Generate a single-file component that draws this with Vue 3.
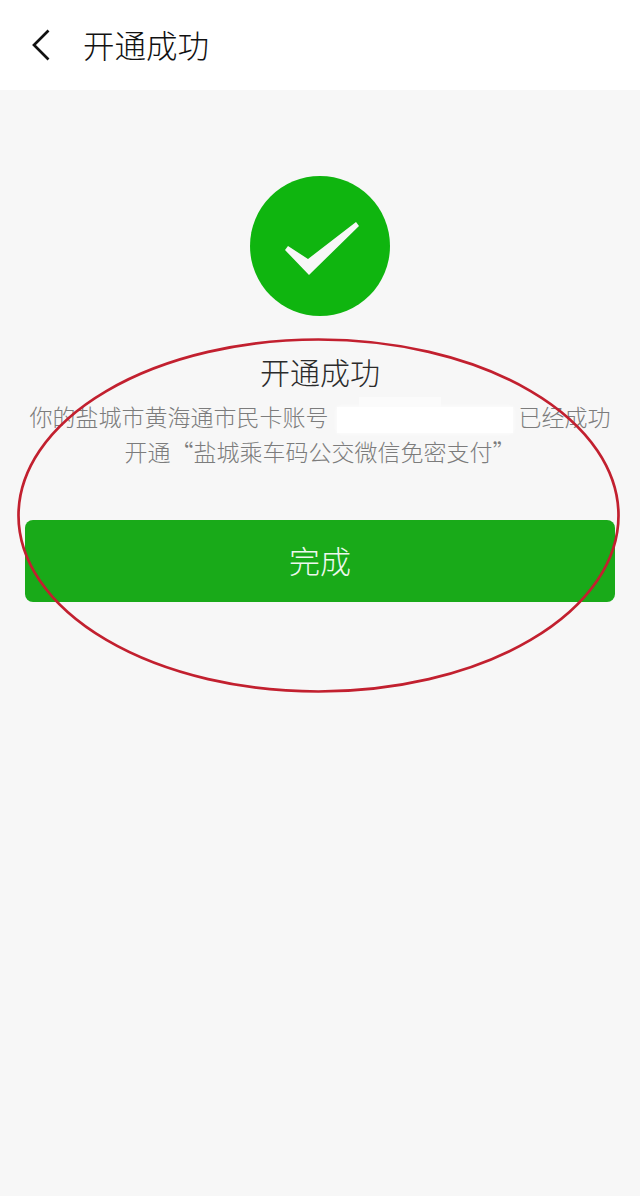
<script setup>
const title = '开通成功'
</script>

<template>
  <div class="page">
    <header class="bar">
      <svg class="back" viewBox="0 0 20 32" aria-hidden="true">
        <path d="M17.5 1.5 L3 16 L17.5 30.5" fill="none" stroke="#111" stroke-width="2.7" />
      </svg>
      <h1 class="bar-title">{{ title }}</h1>
    </header>

    <main class="content">
      <svg class="ok" viewBox="0 0 140 140" aria-hidden="true">
        <circle cx="70" cy="70" r="70" fill="#0fb50f" />
        <path d="M35 74 L38 70 L58 83 L106 46 L109 50 L59 99 Z" fill="#f7f7f7" />
      </svg>
      <h2 class="result-title">{{ title }}</h2>
      <p class="desc">
        你的盐城市黄海通市民卡账号<span class="mask"></span>已经成功<br />开通“盐城乘车码公交微信免密支付”
      </p>
      <button class="done" type="button">完成</button>
    </main>

    <svg class="mark" viewBox="0 0 640 1196" aria-hidden="true">
      <ellipse cx="318.5" cy="515.5" rx="300" ry="176" fill="none" stroke="#c2202f" stroke-width="2.7" />
    </svg>
  </div>
</template>

<style>
html, body { margin: 0; background: #f7f7f7; }
</style>

<style scoped>
.page {
  position: relative;
  width: 640px;
  height: 1196px;
  overflow: hidden;
  background: #f7f7f7;
  font-family: "Noto Sans CJK SC", "Noto Sans", sans-serif;
}
.bar {
  display: flex;
  align-items: center;
  height: 90px;
  padding-left: 31px;
  box-sizing: border-box;
  background: #fff;
}
.back {
  width: 20px;
  height: 32px;
  flex: none;
}
.bar-title {
  margin: -2px 0 0 32px;
  font-size: 31.5px;
  font-weight: 300;
  line-height: 40px;
  color: #111;
}
.content {
  display: flex;
  flex-direction: column;
  align-items: center;
  padding: 86px 25px 0;
}
.ok {
  width: 140px;
  height: 140px;
  flex: none;
}
.result-title {
  margin: 35px 0 0;
  font-size: 30px;
  font-weight: 300;
  line-height: 40px;
  color: #2b2b2b;
}
.desc {
  margin: 8px -5px 0;
  font-size: 23px;
  font-weight: 300;
  line-height: 35px;
  text-align: center;
  color: #7c7c7c;
  white-space: nowrap;
}
.mask {
  position: relative;
  display: inline-block;
  box-sizing: border-box;
  width: 176px;
  height: 26px;
  margin: -6px 6px -6px 8px;
  vertical-align: middle;
  background: #fff;
  box-shadow: 0 0 4px #fff;
}
.mask::before {
  content: "";
  position: absolute;
  left: 22px;
  top: -10px;
  width: 82px;
  height: 10px;
  background: #fbfbfb;
}
.done {
  display: block;
  box-sizing: border-box;
  width: 590px;
  height: 82px;
  margin-top: 51px;
  padding-bottom: 4px;
  border: 0;
  border-radius: 8px;
  background: #19aa19;
  color: #eef8ee;
  font: inherit;
  font-size: 31px;
  font-weight: 300;
}
.mark {
  position: absolute;
  inset: 0;
  width: 640px;
  height: 1196px;
  pointer-events: none;
}
</style>
